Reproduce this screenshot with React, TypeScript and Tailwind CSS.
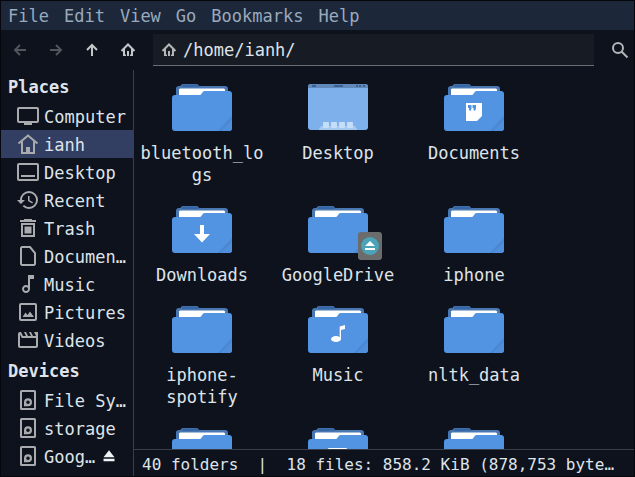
import React from "react";

type Glyph = "documents" | "downloads" | "mounted" | "music" | "pictures";

type FolderItem = { name: string; glyph?: Glyph; desktop?: boolean };

const folders: FolderItem[] = [
  { name: "bluetooth_logs" },
  { name: "Desktop", desktop: true },
  { name: "Documents", glyph: "documents" },
  { name: "Downloads", glyph: "downloads" },
  { name: "GoogleDrive", glyph: "mounted" },
  { name: "iphone" },
  { name: "iphone-spotify" },
  { name: "Music", glyph: "music" },
  { name: "nltk_data" },
  { name: "" },
  { name: "", glyph: "pictures" },
  { name: "" },
];

function SideIcon({ children }: { children: React.ReactNode }) {
  return (
    <svg viewBox="0 0 24 24" className="size-6 shrink-0 text-[#a9abae]" fill="currentColor" aria-hidden="true">
      {children}
    </svg>
  );
}

const outline = { fill: "none", stroke: "currentColor", strokeWidth: 2 };

const driveIcon = (
  <>
    <rect x="5" y="3" width="14" height="18" rx="0.6" {...outline} />
    <path d="M8 18.500V14.200a4 4 0 1 1 4 4.100H8.800zM12 12.400a1.800 1.800 0 1 0 0 3.600 1.800 1.800 0 0 0 0-3.600z" fillRule="evenodd" />
  </>
);

const places: { label: string; icon: React.ReactNode; active?: boolean }[] = [
  {
    label: "Computer",
    icon: (
      <>
        <rect x="2" y="4" width="20" height="14" rx="1" {...outline} />
        <path d="M8 18h8v3H8z" />
      </>
    ),
  },
  {
    label: "ianh",
    active: true,
    icon: (
      <>
        <path d="M2.500 11.500 12 3.500l9.500 8M6 9.500V21h12V9.500" {...outline} />
        <path d="M10 15h4v6h-4z" />
      </>
    ),
  },
  {
    label: "Desktop",
    icon: (
      <>
        <rect x="2" y="4" width="20" height="16" rx="1" {...outline} />
        <path d="M5 15h14v2H5z" />
      </>
    ),
  },
  {
    label: "Recent",
    icon: (
      <path d="M13 3a9 9 0 0 0-9 9H1l3.890 3.890.07.14L9 12H6c0-3.870 3.130-7 7-7s7 3.130 7 7-3.130 7-7 7c-1.930 0-3.680-.79-4.940-2.060l-1.420 1.420A8.950 8.950 0 0 0 13 21a9 9 0 0 0 0-18zm-1 5v5l4.280 2.540.72-1.210-3.500-2.080V8H12z" />
    ),
  },
  {
    label: "Trash",
    icon: (
      <>
        <path d="M8 3h8v1h4v2H4V4h4z" />
        <path d="M6 8h12v12H6z" {...outline} />
        <path d="M8.500 10.500h7v7h-7z" />
      </>
    ),
  },
  { label: "Documen…", icon: <path d="M6 3h8l5 6v11l-1 1H6l-1-1V4z" {...outline} /> },
  {
    label: "Music",
    icon: (
      <path d="m12 3 .01 10.550c-.59-.34-1.270-.55-2-.55C7.790 13 6 14.790 6 17s1.790 4 4.010 4S14 19.210 14 17V7h4V3h-6zm-1.990 16c-1.100 0-2-.9-2-2s.9-2 2-2 2 .9 2 2-.9 2-2 2z" />
    ),
  },
  {
    label: "Pictures",
    icon: (
      <>
        <rect x="4" y="4" width="16" height="16" rx="1" {...outline} />
        <path d="m6.500 17 3-4.500 2 2.500 2.500-3.500 4 5.500z" />
      </>
    ),
  },
  {
    label: "Videos",
    icon: (
      <path d="M4 6.470 5.760 10H20v8H4V6.470M22 4h-4l2 4h-3l-2-4h-2l2 4h-3l-2-4H8l2 4H7L5 4H4c-1.100 0-2 .9-2 2v12c0 1.100.9 2 2 2h16c1.100 0 2-.9 2-2V4z" />
    ),
  },
];

const devices = [
  { label: "File Sy…", eject: false },
  { label: "storage", eject: false },
  { label: "Goog…", eject: true },
];

function SideRow({ label, icon, active, eject }: { label: string; icon: React.ReactNode; active?: boolean; eject?: boolean }) {
  return (
    <li className={active ? "flex h-7 items-center bg-[#323f62]" : "flex h-7 items-center"}>
      <button type="button" className="flex h-7 items-center gap-1 pl-[15px] whitespace-nowrap">
        <SideIcon>{icon}</SideIcon>
        <span className="pt-0.5">{label}</span>
      </button>
      {eject && (
        <button type="button" aria-label="Eject" className="ml-1.5">
          <svg viewBox="0 0 14 14" className="size-4" fill="#f1f3f5" aria-hidden="true">
            <path d="M7 2 11.800 8H2.200zM2.200 9.500h9.600v2H2.200z" />
          </svg>
        </button>
      )}
    </li>
  );
}

function FolderGlyph({ glyph }: { glyph: Glyph }) {
  switch (glyph) {
    case "documents":
      return (
        <>
          <path d="M24 27h16v13l-5 5H24z" fill="#fff" />
          <path d="M26 29h3.500v3.500L28.500 35 27 34v-2h-1zM30.500 29H34v3.500L33 35l-1.500-1v-2h-1z" fill="#5294e2" />
        </>
      );
    case "downloads":
      return <path d="M30 27h4v9h6l-8 8.500-8-8.500h6z" fill="#fff" />;
    case "music":
      return (
        <>
          <ellipse cx="30" cy="41" rx="5" ry="3" fill="#fff" />
          <path d="M33.700 28.500 39 27v4l-4 1v9h-1.300z" fill="#fff" />
        </>
      );
    case "pictures":
      return <rect x="22" y="28" width="19" height="14" rx="1" fill="#fff" />;
    case "mounted":
      return (
        <>
          <rect x="52" y="34" width="24" height="28" rx="3" fill="#6b6d6c" />
          <circle cx="64" cy="48" r="9" fill="#4ba3b9" />
          <path d="m64 43 5 5H59zM59 50h10v2H59z" fill="#fff" />
        </>
      );
  }
}

function FolderPicture({ glyph }: { glyph?: Glyph }) {
  return (
    <svg viewBox="0 0 64 64" className="size-16 overflow-visible" aria-hidden="true">
      <path d="M6 24V13a3 3 0 0 1 3-3h1.500a3 3 0 0 1 2.500-2h13.500a3 3 0 0 1 2.500 2h26a3 3 0 0 1 3 3v8H6z" fill="#4877b1" />
      <path d="M12 9.500q1-1 2-1h12q2 0 3 2.500H12z" fill="#3566a6" />
      <path d="M9 22v-8.500l1-1h44l1 1V22z" fill="#fff" />
      <path d="M2 22a3 3 0 0 1 3-3h24.500q1.500 0 2.200-1.500l.8-1.200q.8-1.300 2.500-1.300h24a3 3 0 0 1 3 3v34a3 3 0 0 1-3 3H5a3 3 0 0 1-3-3z" fill="#5294e2" />
      <path d="M62 40v12a3 3 0 0 1-3 3H48z" fill="#4f8fdc" />
      <path d="M62 40v4L51 55h-3z" fill="#4a88d1" />
      {glyph && <FolderGlyph glyph={glyph} />}
    </svg>
  );
}

function DesktopPicture() {
  return (
    <svg viewBox="0 0 64 64" className="size-16" aria-hidden="true">
      <rect x="2" y="8" width="60" height="46" rx="3" fill="#7eb0eb" />
      <path d="M2 12v-1a3 3 0 0 1 3-3h54a3 3 0 0 1 3 3v1z" fill="#5f89bb" />
      <path d="M6 9h4v2H6zM28 9h9v2h-9zM50 9h2v2h-2zM53 9h2v2h-2zM57 9h2v2h-2z" fill="#3c6294" />
      <path d="M12.500 54 15 50h34l2.500 4z" fill="#a6c9f2" />
      {[17, 25, 33, 41].map((x) => (
        <rect key={x} x={x} y="46" width="6" height="6" rx="1" fill="#c6ddf7" />
      ))}
    </svg>
  );
}

const arrowProps = { fill: "none", stroke: "currentColor", strokeWidth: 2 };

function HomeGlyph() {
  return (
    <svg viewBox="0 0 16 16" className="size-4" aria-hidden="true">
      <path d="M1.500 9 8 2.500 14.500 9M4 7v7M12 7v7" {...arrowProps} />
      <path d="M7 9h2v5H7zM3 12.500h3V14H3zM10 12.500h3V14h-3z" fill="currentColor" />
    </svg>
  );
}

function ToolButton({ label, disabled, children }: { label: string; disabled?: boolean; children: React.ReactNode }) {
  return (
    <button
      type="button"
      aria-label={label}
      disabled={disabled}
      className="flex size-8 items-center justify-center text-[#c3c6ca] disabled:text-[#51555c]"
    >
      {children}
    </button>
  );
}

export default function App() {
  return (
    <div className="flex h-screen flex-col overflow-hidden border border-[#05070d] bg-[#0d121c] font-['DejaVu_Sans_Mono','Liberation_Mono',monospace] text-[17px] leading-[22px] text-[#dfe4ea]">
      <nav aria-label="Menu" className="flex h-[29px] shrink-0 items-center gap-[15px] bg-[#1c273a] px-[7px] text-[#9aaabd]">
        {["File", "Edit", "View", "Go", "Bookmarks", "Help"].map((m) => (
          <button type="button" key={m}>{m}</button>
        ))}
      </nav>

      <header className="flex h-10 shrink-0 items-center">
        <div className="flex shrink-0 gap-1 px-[3px]">
          <ToolButton label="Back" disabled>
            <svg viewBox="0 0 16 16" className="size-4" aria-hidden="true"><path d="M14 8H3M8 3 3 8l5 5" {...arrowProps} /></svg>
          </ToolButton>
          <ToolButton label="Forward" disabled>
            <svg viewBox="0 0 16 16" className="size-4" aria-hidden="true"><path d="M2 8h11M8 3l5 5-5 5" {...arrowProps} /></svg>
          </ToolButton>
          <ToolButton label="Up">
            <svg viewBox="0 0 16 16" className="size-4" aria-hidden="true"><path d="M8 14V3M3 8l5-5 5 5" {...arrowProps} /></svg>
          </ToolButton>
          <ToolButton label="Home"><HomeGlyph /></ToolButton>
        </div>
        <label className="ml-1.5 flex h-8 min-w-0 flex-1 items-center gap-1.5 border-b border-[#696d74] bg-[#171b24] px-2 text-[#b4b6b8]">
          <HomeGlyph />
          <input
            type="text"
            aria-label="Location"
            defaultValue="/home/ianh/"
            className="min-w-0 flex-1 bg-transparent text-[#dfe4ea] outline-none"
          />
        </label>
        <button type="button" aria-label="Search" className="flex w-10 shrink-0 justify-center pl-3 text-[#b2b5b9]">
          <svg viewBox="0 0 18 18" className="size-[18px]" aria-hidden="true">
            <circle cx="7" cy="7" r="5" {...arrowProps} />
            <path d="m10.500 10.500 6 6" {...arrowProps} />
          </svg>
        </button>
      </header>

      <div className="flex min-h-0 flex-1">
        <aside className="w-[133px] shrink-0 overflow-hidden border-r border-[#3a3e48]">
          <h2 className="flex h-8 items-center pt-0.5 pl-[7px] font-bold">Places</h2>
          <ul>
            {places.map((p) => <SideRow key={p.label} {...p} />)}
          </ul>
          <h2 className="flex h-8 items-center pt-0.5 pl-[7px] font-bold">Devices</h2>
          <ul>
            {devices.map((d) => <SideRow key={d.label} {...d} icon={driveIcon} />)}
          </ul>
        </aside>

        <div className="flex min-w-0 flex-1 flex-col">
          <main className="grid min-h-0 flex-1 grid-cols-[repeat(auto-fill,136px)] content-start gap-y-3 overflow-hidden pt-1.5">
            {folders.map((f, i) => (
              <div key={i} className="flex flex-col items-center gap-0.5 px-1">
                {f.desktop ? <DesktopPicture /> : <FolderPicture glyph={f.glyph} />}
                <span className="w-full text-center wrap-break-word">{f.name}</span>
              </div>
            ))}
          </main>
          <footer className="shrink-0 truncate border-t border-[#3a3e48] px-2 pt-1 text-base leading-[22px] whitespace-pre">
            {"40 folders  |  18 files: 858.2 KiB (878,753 byte…"}
          </footer>
        </div>
      </div>
    </div>
  );
}
